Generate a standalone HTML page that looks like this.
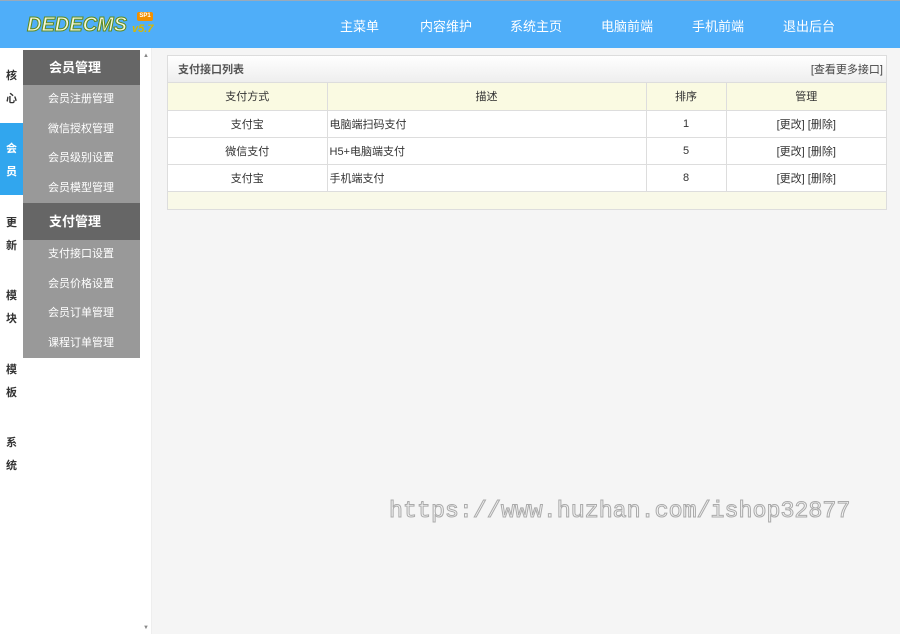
<!DOCTYPE html>
<html><head><meta charset="utf-8"><style>
*{margin:0;padding:0;box-sizing:border-box}
body{width:900px;height:634px;overflow:hidden;background:#f5f5f5;font-family:"Liberation Sans","Noto Sans CJK SC",sans-serif;font-size:12px;color:#333;position:relative}
.top{position:absolute;left:0;top:0;width:900px;height:48px;background:#4faef9;border-top:1px solid #9ab}
.logo{position:absolute;left:27px;top:13px;font:italic 900 20px "Liberation Sans",sans-serif;color:#f2f6d8;letter-spacing:0px;-webkit-text-stroke:1px #5d8a1c}
.ver{position:absolute;left:132px;top:22px;font:italic bold 11px "Liberation Sans",sans-serif;color:#d8b800}
.sp{position:absolute;left:137px;top:11px;width:16px;height:9px;background:#f09000;border-radius:2px;font:bold 6px sans-serif;color:#fff;text-align:center;line-height:9px}
.nav{position:absolute;top:15px;color:#fff;font-size:13px}
.leftbg{position:absolute;left:0;top:48px;width:152px;height:586px;background:#fff}
.tabs{position:absolute;left:0;top:48px;width:23px;height:586px;background:#fff}
.tab{position:absolute;left:0;width:23px;text-align:center;font-size:11px;font-weight:bold;line-height:23px;color:#333}
.menu{position:absolute;left:23px;top:50px;width:117px;background:#999}
.mh{height:35px;background:#666;color:#fff;font-size:13px;font-weight:bold;padding-left:26px;line-height:35px}
.mi{height:29.5px;line-height:29.5px;color:#fff;font-size:11px;padding-left:25px}
.sb{position:absolute;left:140px;top:48px;width:12px;height:586px;background:#fff;border-right:1px solid #eee}
.box{position:absolute;left:167px;top:55px;width:720px;height:155px;border:1px solid #ddd;background:#f9f9e8}
.tt{height:27px;background:linear-gradient(#fff,#eee);border-bottom:1px solid #ddd;position:relative}
.tt b{position:absolute;left:10px;top:5px;font-size:11px;color:#555}
.tt span{position:absolute;right:3px;top:5px;font-size:11px;color:#444}
table{border-collapse:collapse;width:718px}
td{height:27px;border:1px solid #ddd;border-top:0;text-align:center;font-size:11px;background:#fff}
tr.h td{background:#fafae2}
td:first-child{border-left:0}td:last-child{border-right:0}
.l{text-align:left;padding-left:2px}
.wm{position:absolute;left:389px;top:498px;font:23.3px "Liberation Mono",monospace;color:#f5f5f5;-webkit-text-stroke:1px #aaa}
</style></head><body>
<div class="top">
<div class="logo">DEDECMS</div><div class="sp">SP1</div><div class="ver">v5.7</div>
<div class="nav" style="left:340px">主菜单</div>
<div class="nav" style="left:420px">内容维护</div>
<div class="nav" style="left:510px">系统主页</div>
<div class="nav" style="left:601px">电脑前端</div>
<div class="nav" style="left:692px">手机前端</div>
<div class="nav" style="left:783px">退出后台</div>
</div>
<div class="leftbg"></div>
<div class="tabs">
<div class="tab" style="top:17px">核<br>心</div>
<div class="tab" style="top:75px;height:72px;padding-top:15px;background:#31a6ee;color:#fff">会<br>员</div>
<div class="tab" style="top:164px">更<br>新</div>
<div class="tab" style="top:237px">模<br>块</div>
<div class="tab" style="top:311px">模<br>板</div>
<div class="tab" style="top:384px">系<br>统</div>
</div>
<div class="menu">
<div class="mh">会员管理</div>
<div class="mi">会员注册管理</div><div class="mi">微信授权管理</div><div class="mi">会员级别设置</div><div class="mi">会员模型管理</div>
<div class="mh" style="height:37px;line-height:37px">支付管理</div>
<div class="mi">支付接口设置</div><div class="mi">会员价格设置</div><div class="mi">会员订单管理</div><div class="mi">课程订单管理</div>
</div>
<div class="sb"><div style="position:absolute;left:3px;top:5px;font-size:6px;color:#888">▲</div><div style="position:absolute;left:3px;bottom:3px;font-size:6px;color:#888">▼</div></div>
<div class="box">
<div class="tt"><b>支付接口列表</b><span>[查看更多接口]</span></div>
<table>
<tr class="h"><td style="width:159px">支付方式</td><td style="width:319px">描述</td><td style="width:80px">排序</td><td>管理</td></tr>
<tr><td>支付宝</td><td class="l">电脑端扫码支付</td><td>1</td><td>[更改] [删除]</td></tr>
<tr><td>微信支付</td><td class="l">H5+电脑端支付</td><td>5</td><td>[更改] [删除]</td></tr>
<tr><td>支付宝</td><td class="l">手机端支付</td><td>8</td><td>[更改] [删除]</td></tr>
</table>
</div>
<div class="wm">https://www.huzhan.com/ishop32877</div>
</body></html>
